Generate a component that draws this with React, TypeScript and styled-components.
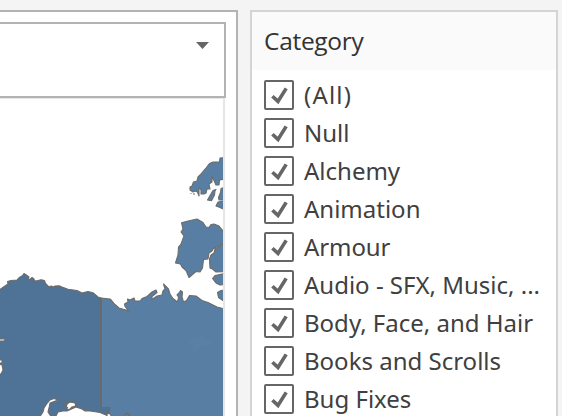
import React from "react";
import styled, { createGlobalStyle } from "styled-components";

const GlobalStyle = createGlobalStyle`
  * { box-sizing: border-box; }
  html, body { margin: 0; background: #f4f4f4; overflow: hidden; }
`;

const Dashboard = styled.main`
  display: flex;
  gap: 12px;
  width: 562px;
  height: 416px;
  padding-top: 10px;
  overflow: hidden;
  background: #f4f4f4;
`;

const Worksheet = styled.section`
  width: 238px;
  height: 406px;
  flex: none;
  padding: 10px 10px 0 0;
  background: #fff;
  border: solid #b3b3b3;
  border-width: 2px 2px 0 0;
`;

const Dropdown = styled.div`
  display: flex;
  justify-content: flex-end;
  align-items: flex-start;
  width: 226px;
  height: 76px;
  padding: 18px 15px 0 0;
  border: solid #b3b3b3;
  border-width: 2px 2px 2px 0;
`;

const MapPane = styled.div`
  width: 225px;
  height: 318px;
  border: solid #e6e6e6;
  border-width: 1px 2px 0 0;
  svg { display: block; }
`;

const FilterCard = styled.aside`
  width: 308px;
  height: 406px;
  flex: none;
  background: #fff;
  border: solid #d4d4d4;
  border-width: 2px 2px 0 2px;
`;

const FilterTitle = styled.header`
  display: flex;
  align-items: center;
  height: 58px;
  padding: 0 0 0 12px;
  background: #fafafa;
  color: #333;
  font: 400 24.5px/30px "Open Sans", sans-serif;
  letter-spacing: -0.3px;
`;

const FilterList = styled.div`
  display: flex;
  flex-direction: column;
  gap: 8px;
  padding: 10px 0 0 12px;
`;

const FilterRow = styled.div`
  display: flex;
  gap: 10px;
  height: 30px;
  flex: none;
`;

const CheckBox = styled.span`
  width: 30px;
  height: 30px;
  flex: none;
  border: 2px solid #666;
  border-radius: 2px;
  svg { display: block; }
`;

const Label = styled.span<{ $spacing?: number }>`
  color: #404040;
  font: 400 24px/30px "Noto Sans", sans-serif;
  letter-spacing: ${(p) => p.$spacing ?? 0}px;
  white-space: nowrap;
`;

const categories: { name: string; spacing?: number }[] = [
  { name: "(All)", spacing: 1.2 },
  { name: "Null" },
  { name: "Alchemy" },
  { name: "Animation" },
  { name: "Armour", spacing: -0.1 },
  { name: "Audio - SFX, Music, ..." },
  { name: "Body, Face, and Hair" },
  { name: "Books and Scrolls" },
  { name: "Bug Fixes" },
];

const Check = () => (
  <svg width="26" height="26" viewBox="0 0 26 26">
    <path d="M6.4 14.2 12 19.4 20.2 6.4" fill="none" stroke="#666" strokeWidth="3.6" />
  </svg>
);

const RegionMap = () => (
  <svg width="223" height="317" viewBox="0 99 223 317">
    <g stroke="#6b6b69" strokeWidth="1.1" strokeLinejoin="round" fill="#597ea3">
      <path d="M101 298 110 299 112 301 115 304.5 119 308 126 310 129 311.5 125 306.5 124.5 304 128 302 127.5 299 130 300 134 298 135 301 140 301 142 298.5 147 296.5 152 292 156 290 157 292.5 152 296.5 152 299.5 157 296 162 295 163 291 165 289 163.5 284 168.5 289 170 294 173 298.5 177.5 302 178.5 297 177 295 179 293 180.5 290.5 182.5 292 182 297 183.5 302 186.5 300.5 189.5 295.5 196 296 202 300.5 208 302.5 217 307 225 309V418H113L109 413 110 407.5 101 407.5Z" />
      <path fill="#4e7397" d="M-2 290 0 289.5 5 286 8 284 7.5 281.5 11 280.5 17 280 20 277 22 276 24 273.5 27 275.5 29 277 27.5 280.5 31 278.5 32 277.5 34 279 34.5 281 38 280.5 41 279.7 44.5 280.5 45.5 283.5 49 287 51 286 54 287 55 286 59 285.7 62 287 68 289.3 77 290.5 82 293 88 291.5 93 292.7 98 297 101 298V407.5H110L109 413 106 415 100 412.5 90 411 85 410.5 82 409 77 408 70 412 64 414 57 418H-2Z" />
      <path d="M101 298V407" fill="none" strokeWidth="1.5" />
      <path fill="#fff" d="M39 418 43 412 44 408 47 403.5 50 400 54 398.5 58 400 50 403 49 408 48 412 52 418ZM55 418 58 412 63 411 67 411 76 407 82 409 85 411 90 411 100 412.5 106 415 110 418ZM67 404 70 402 75 403 76 406 72 407 69 410 66 408ZM-2 339 6 339 4 341-2 341ZM-2 360 2 360 2 363-2 363ZM-2 364 2 365 3 370 1 374-2 374Z" />
      <path fill="none" d="M57 398 61 396M64 401 67 404 64 405 68 408M69 400 71 402M73 401 77 404 75 406M124 415 127 413 130 416M105 409 108 411 106 415" />
      <path d="M181.5 222.7 188 221 197 219 203 222.5 206 227 209 227.5 211 224.5 214 224 219 226 223 231 225 242 219 245.5 213 249 212 251 209 253 208 259 203.5 259.5 202.5 268 200 272 196 271.5 189 277.5 186 270.5 182 267 180.5 264 175.5 263 178 255 178.5 247 181 244 184 236 181 232 183 229Z" />
      <path d="M225 243 215 249 214 253 211 255 209.5 259 210 268 212.5 269 216 272 225 271.7ZM225 273.5 215 275.5 212.5 278.5 216 283 220 285 225 284.7ZM225 290 221 290.5 217.5 292.5 218.5 297.5 225 302Z" />
      <path d="M225 157.5 220 158 219.5 162 213 162 209.5 163.5 206 168 203 171.5 200 175 198 177 197 181 193.5 182 192 186 190 187 190 190 193 192 195 191 197.5 192 199 196 199 187.5 201 190 201 194 204 194 206 193 207 189 210 189 209 184 212 182 212 176 214 180.5 216 185 219 185 219.5 180 225 179ZM216 189.5 213 190.5 209.5 196.5 207.5 200 211.5 200.7 214.5 195 215 191ZM225 187 221 188.5 220.5 192.5 218.5 197.5 219 200 225 200ZM225 201 218 202 216 206 220 207.5 225 210Z" />
    </g>
    <path d="M191 193v1M194 193v2M182 234h1M182 240h1" stroke="#777" fill="none" />
    <path d="M187 341 199 337 203 334 206 339 214 342 202 346 196 351 191 356 193 345Z" fill="#5b80a5" />
  </svg>
);

export default function App() {
  return (
    <>
      <GlobalStyle />
      <Dashboard>
        <Worksheet>
          <Dropdown>
            <svg width="13" height="7" viewBox="0 0 13 7">
              <path d="M0 0h13L6.5 7Z" fill="#666" />
            </svg>
          </Dropdown>
          <MapPane>
            <RegionMap />
          </MapPane>
        </Worksheet>
        <FilterCard>
          <FilterTitle>Category</FilterTitle>
          <FilterList>
            {categories.map((c) => (
              <FilterRow key={c.name}>
                <CheckBox>
                  <Check />
                </CheckBox>
                <Label $spacing={c.spacing}>{c.name}</Label>
              </FilterRow>
            ))}
          </FilterList>
        </FilterCard>
      </Dashboard>
    </>
  );
}
